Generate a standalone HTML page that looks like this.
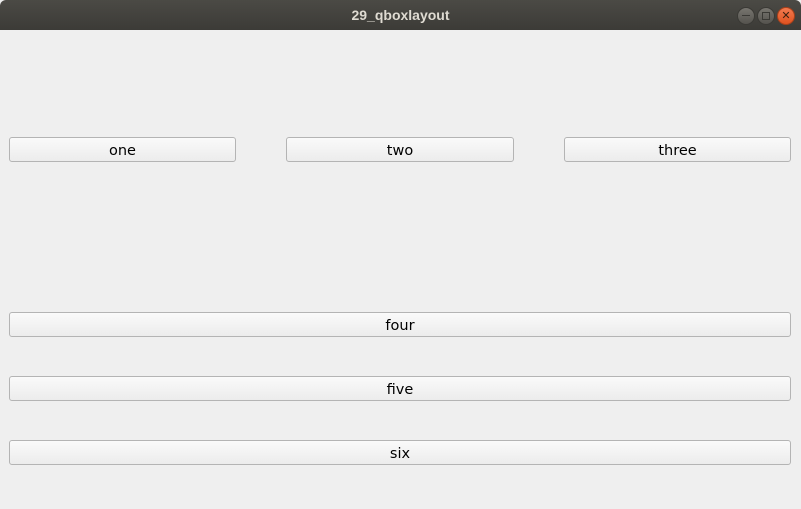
<!DOCTYPE html>
<html><head><style>
body{margin:0;width:801px;height:509px;overflow:hidden;background:#efefef;font-family:"Liberation Sans","DejaVu Sans",sans-serif;position:relative}
.tb{position:absolute;left:0;top:0;width:801px;height:30px;background:linear-gradient(#4b4a45,#3c3b37);border-radius:6px 6px 0 0;color:#dfdbd2;font-weight:bold;font-size:14px;text-align:center;line-height:30px}
.b{position:absolute;height:23px;border:1px solid #b4b4b4;border-radius:3px;background:linear-gradient(#fafafa,#ececec);font-size:14.5px;text-align:center;line-height:26px;color:#000;font-family:"DejaVu Sans",sans-serif}
.c{position:absolute;top:7px;width:16px;height:16px;border-radius:50%;background:linear-gradient(#77756f,#55534e);border:1px solid #3a3935}
</style></head><body>
<div class="tb">29_qboxlayout</div>
<div class="c" style="left:737px"><div style="position:absolute;left:4px;top:7px;width:8px;height:1px;background:#3a3935"></div></div>
<div class="c" style="left:757px"><div style="position:absolute;left:4px;top:4px;width:6px;height:6px;border:1px solid #3a3935"></div></div>
<div class="c" style="left:777px;background:linear-gradient(#f27a4f,#e0521f);border-color:#a8401a;color:#3a2010;font-size:11px;line-height:16px;text-align:center">✕</div>
<div class="b" style="left:9px;top:137px;width:225px">one</div>
<div class="b" style="left:286px;top:137px;width:226px">two</div>
<div class="b" style="left:564px;top:137px;width:225px">three</div>
<div class="b" style="left:9px;top:312px;width:780px">four</div>
<div class="b" style="left:9px;top:376px;width:780px">five</div>
<div class="b" style="left:9px;top:440px;width:780px">six</div>
</body></html>
